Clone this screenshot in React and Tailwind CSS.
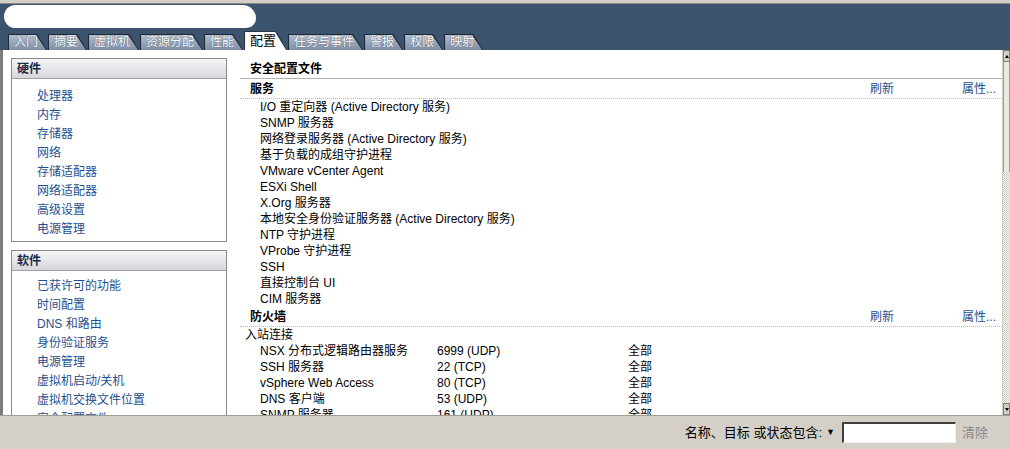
import React from "react";

const font = "font-['Liberation_Sans','Noto_Sans_CJK_SC',sans-serif]";

const tabs = ["入门", "摘要", "虚拟机", "资源分配", "性能", "配置", "任务与事件", "警报", "权限", "映射"];

function Tab({ label, active }) {
  if (active) {
    return (
      <div className="h-[19px] bg-[#2a3446] [clip-path:polygon(0_0,calc(100%-11px)_0,100%_100%,0_100%)] pl-px pt-px">
        <div className="h-full bg-white [clip-path:polygon(0_0,calc(100%-12px)_0,calc(100%-1px)_100%,0_100%)] pl-[5px] pr-[11px] text-[13px] leading-[18px] text-black">
          {label}
        </div>
      </div>
    );
  }
  return (
    <div className="h-[16px] bg-[#1f2838] [clip-path:polygon(0_0,calc(100%-10px)_0,100%_100%,0_100%)] pl-px pt-px">
      <div className="h-full bg-[linear-gradient(#b2bdcc,#7f8ea6)] [clip-path:polygon(0_0,calc(100%-11px)_0,calc(100%-1px)_100%,0_100%)] pl-[5px] pr-[9px] text-[12px] leading-[15px] text-white [text-shadow:0_0_1px_#2a3446]">
        {label}
      </div>
    </div>
  );
}

const hw = ["处理器", "内存", "存储器", "网络", "存储适配器", "网络适配器", "高级设置", "电源管理"];
const sw = ["已获许可的功能", "时间配置", "DNS 和路由", "身份验证服务", "电源管理", "虚拟机启动/关机", "虚拟机交换文件位置", "安全配置文件"];

const services = [
  "I/O 重定向器 (Active Directory 服务)",
  "SNMP 服务器",
  "网络登录服务器 (Active Directory 服务)",
  "基于负载的成组守护进程",
  "VMware vCenter Agent",
  "ESXi Shell",
  "X.Org 服务器",
  "本地安全身份验证服务器 (Active Directory 服务)",
  "NTP 守护进程",
  "VProbe 守护进程",
  "SSH",
  "直接控制台 UI",
  "CIM 服务器",
];

const fw = [
  ["NSX 分布式逻辑路由器服务", "6999 (UDP)", "全部"],
  ["SSH 服务器", "22 (TCP)", "全部"],
  ["vSphere Web Access", "80 (TCP)", "全部"],
  ["DNS 客户端", "53 (UDP)", "全部"],
  ["SNMP 服务器", "161 (UDP)", "全部"],
];

function Box({ title, items, pt }) {
  return (
    <div className="w-[216px] border border-[#8a8a8a] bg-white">
      <div className="h-[20px] bg-[linear-gradient(#f6f6f8,#d6d6dc)] border-b border-[#a0a0a8] pl-[5px] text-[12px] leading-[20px] font-bold text-[#1a2a48]">
        {title}
      </div>
      <div className={`${pt} pb-[2px] pl-[25px]`}>
        {items.map((t, i) => (
          <div key={i} className="h-[19px] text-[12px] leading-[19px] text-[#1f4f8f] whitespace-nowrap">
            {t}
          </div>
        ))}
      </div>
    </div>
  );
}

function SectionHead({ title }) {
  return (
    <div className="h-[20px] shrink-0 flex items-center border-b border-dotted border-[#b8b8b8] pl-[10px] text-[12px]">
      <div className="flex-1 font-bold text-black">{title}</div>
      <div className="w-[92px] text-[#1f4f8f]">刷新</div>
      <div className="w-[40px] text-[#1f4f8f]">属性...</div>
    </div>
  );
}

export default function App() {
  return (
    <div className={`w-[1010px] h-[449px] overflow-hidden flex flex-col bg-white ${font}`}>
      <div className="h-[4px] shrink-0 bg-[#d4d0c8] border-b border-[#8c8a86]" />
      <div className="h-[46px] shrink-0 bg-[#3b536c] flex flex-col">
        <div className="mt-[1px] ml-[4px] w-[252px] h-[23px] bg-white rounded-[12px_14px_10px_12px]" />
        <div className="mt-auto flex items-end gap-[1px] pl-[8px]">
          {tabs.map((t) => (
            <Tab key={t} label={t} active={t === "配置"} />
          ))}
        </div>
      </div>
      <div className="flex h-[365px] shrink-0 overflow-hidden">
        <div className="w-[240px] shrink-0 border-l-[3px] border-[#7c7c7c] pl-[8px] pt-[8px] flex flex-col gap-[8px] overflow-hidden">
          <Box title="硬件" items={hw} pt="pt-[8px]" />
          <Box title="软件" items={sw} pt="pt-[6px]" />
        </div>
        <div className="w-[762px] shrink-0 flex flex-col overflow-hidden">
          <div className="h-[29px] shrink-0 border-b border-[#b0b0b0] pl-[10px] pt-[11px] text-[12px] leading-[17px] font-bold text-black">
            安全配置文件
          </div>
          <SectionHead title="服务" />
          {services.map((s, i) => (
            <div key={i} className="h-[16px] shrink-0 pl-[20px] text-[12px] leading-[16px] text-black whitespace-nowrap">
              {s}
            </div>
          ))}
          <SectionHead title="防火墙" />
          <div className="h-[16px] shrink-0 pl-[5px] text-[12px] leading-[16px] text-black">入站连接</div>
          {fw.map((r, i) => (
            <div key={i} className="h-[16px] shrink-0 flex pl-[20px] text-[12px] leading-[16px] text-black whitespace-nowrap">
              <div className="w-[177px]">{r[0]}</div>
              <div className="w-[191px]">{r[1]}</div>
              <div>{r[2]}</div>
            </div>
          ))}
        </div>
        <div className="w-[8px] shrink-0 flex flex-col border-l border-[#d4d0c8]">
          <div className="h-[12px] bg-[#d4d0c8] border border-[#808080] flex items-center justify-center">
            <div className="w-0 h-0 border-l-[2px] border-r-[2px] border-b-[3px] border-l-transparent border-r-transparent border-b-black" />
          </div>
          <div className="h-[110px] bg-[#ece9e2] border-x border-[#9c9c9c]" />
          <div className="flex-1 bg-[repeating-conic-gradient(#c8c4bc_0_25%,#ffffff_0_50%)] bg-[length:2px_2px]" />
          <div className="h-[12px] bg-[#d4d0c8] border border-[#808080] flex items-center justify-center">
            <div className="w-0 h-0 border-l-[2px] border-r-[2px] border-t-[3px] border-l-transparent border-r-transparent border-t-black" />
          </div>
        </div>
      </div>
      <div className="flex-1 bg-[#d4d0c8] border-t border-[#a09c94] flex items-center justify-end pr-[22px] text-[12px]">
        <span className="text-black text-[13px]">名称、目标 或状态包含:</span>
        <span className="ml-[4px] text-[9px] text-black">▼</span>
        <div className="ml-[7px] w-[114px] h-[21px] bg-white border-t-2 border-l-2 border-[#404040] border-r border-b border-r-[#f0f0f0] border-b-[#f0f0f0]" />
        <span className="ml-[6px] text-[13px] text-[#8a8a8a]">清除</span>
      </div>
    </div>
  );
}
